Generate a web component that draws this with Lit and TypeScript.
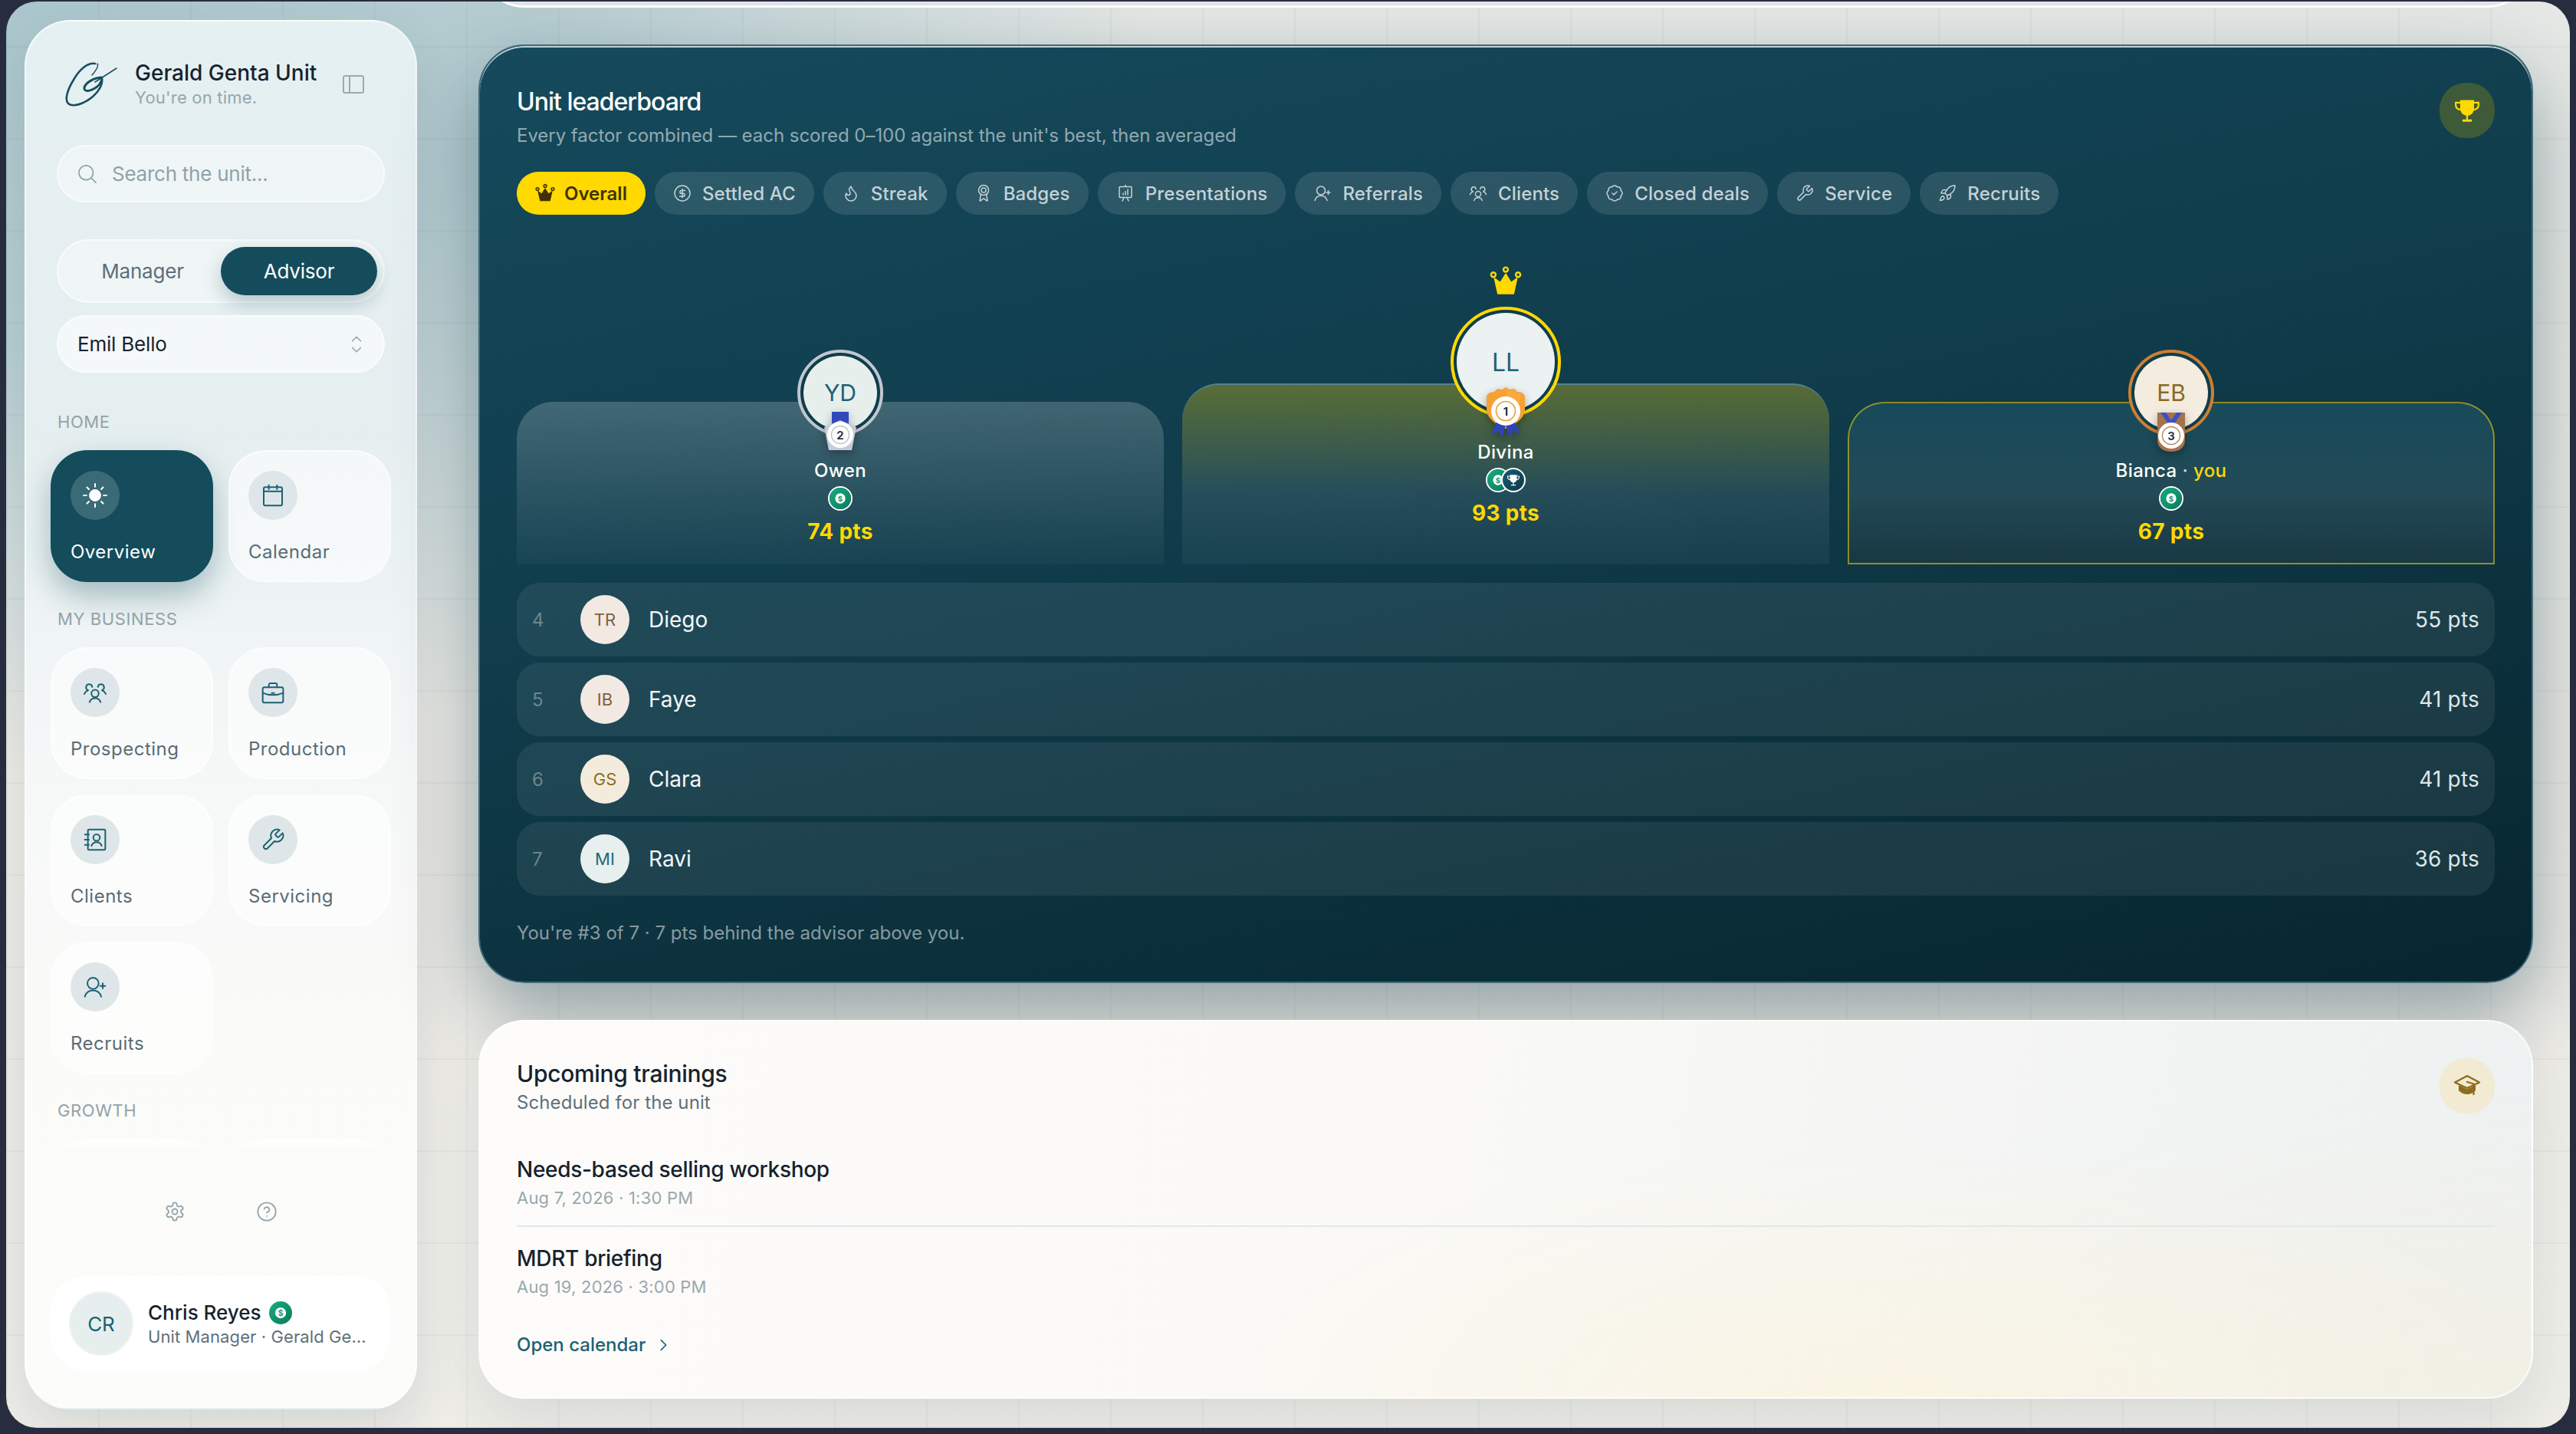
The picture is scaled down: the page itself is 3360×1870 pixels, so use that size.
import { LitElement, html, css, svg } from "lit";
import { customElement } from "lit/decorators.js";

const ic = (body: unknown, size = 28, sw = 2) => html`<svg class="ico" width=${size} height=${size} viewBox="0 0 24 24" fill="none" stroke="currentColor" stroke-width=${sw} stroke-linecap="round" stroke-linejoin="round">${body}</svg>`;

const I = {
  search: svg`<circle cx="10.5" cy="10.5" r="8"/><path d="m21.5 21.5-5.2-5.2"/>`,
  chev: svg`<path d="m7 16 5 5 5-5"/><path d="m7 8 5-5 5 5"/>`,
  sun: svg`<circle cx="12" cy="12" r="5.200" fill="currentColor"/><path d="M12 .8v2.800M12 20.400v2.800M4.100 4.100l1.900 1.900M18 18l1.900 1.900M.8 12h2.800M20.400 12h2.800M4.100 19.900 6 18M18 6l1.900-1.900"/>`,
  cal: svg`<rect x="3" y="4" width="18" height="18" rx="1.500"/><path d="M8 2v4M16 2v4M3 8h18"/>`,
  users: svg`<circle cx="12" cy="13" r="3.600"/><path d="M6.600 21.500c.9-2.500 3-3.800 5.400-3.800s4.500 1.300 5.400 3.800"/><path d="M9.200 6.600A3 3 0 1 0 5 9.600"/><path d="M1.500 13.500c.7-1.800 2-3 3.600-3.500"/><path d="M14.800 6.600A3 3 0 1 1 19 9.600"/><path d="M22.500 13.500c-.7-1.800-2-3-3.600-3.500"/>`,
  brief: svg`<rect x="2" y="7" width="20" height="15" rx="1.500"/><path d="M16 7V4.500A1.500 1.500 0 0 0 14.500 3h-5A1.500 1.500 0 0 0 8 4.500V7"/><path d="M2 12.500c3 1.300 6.500 2 10 2s7-.7 10-2"/><path d="M10.800 12.500h2.400"/>`,
  book: svg`<rect x="5" y="2" width="17" height="20" rx="1"/><path d="M2 7h4M2 12h4M2 17h4"/><circle cx="13.500" cy="10" r="3.200"/><path d="M8.500 18c.9-2.200 2.800-3.500 5-3.500s4.100 1.300 5 3.500"/>`,
  wrench: svg`<path d="M14.700 6.300a1 1 0 0 0 0 1.400l1.600 1.600a1 1 0 0 0 1.400 0l3.770-3.770a6 6 0 0 1-7.940 7.940l-6.910 6.910a2.120 2.120 0 0 1-3-3l6.910-6.910a6 6 0 0 1 7.940-7.940l-3.760 3.760z"/>`,
  userPlus: svg`<circle cx="10" cy="8.500" r="5.500"/><path d="M2 21.500c1-3.800 4.200-6.200 8-6.200s7 2.400 8 6.200"/><path d="M19.500 8.500v5M17 11h5"/>`,
  gear: svg`<path d="M12.220 2h-.44a2 2 0 0 0-2 2v.18a2 2 0 0 1-1 1.730l-.43.250a2 2 0 0 1-2 0l-.15-.08a2 2 0 0 0-2.730.730l-.22.380a2 2 0 0 0 .730 2.730l.15.100a2 2 0 0 1 1 1.720v.510a2 2 0 0 1-1 1.740l-.15.090a2 2 0 0 0-.730 2.730l.22.380a2 2 0 0 0 2.730.730l.15-.08a2 2 0 0 1 2 0l.43.250a2 2 0 0 1 1 1.730V20a2 2 0 0 0 2 2h.44a2 2 0 0 0 2-2v-.18a2 2 0 0 1 1-1.730l.43-.250a2 2 0 0 1 2 0l.15.08a2 2 0 0 0 2.730-.730l.22-.390a2 2 0 0 0-.730-2.730l-.15-.08a2 2 0 0 1-1-1.740v-.5a2 2 0 0 1 1-1.740l.15-.09a2 2 0 0 0 .730-2.730l-.22-.38a2 2 0 0 0-2.730-.730l-.15.08a2 2 0 0 1-2 0l-.43-.25a2 2 0 0 1-1-1.730V4a2 2 0 0 0-2-2z"/><circle cx="12" cy="12" r="3"/>`,
  help: svg`<circle cx="12" cy="12" r="10"/><path d="M9.090 9a3 3 0 0 1 5.830 1c0 2-3 3-3 3"/><path d="M12 17h.01"/>`,
  crown: svg`<path d="M6.200 21 3.700 9.800 8 13l4-6.500L16 13l4.300-3.200L17.800 21z" fill="currentColor" stroke-width="1"/><circle cx="2.800" cy="7" r="1.700" stroke-width="1.400"/><circle cx="12" cy="3.200" r="1.700" stroke-width="1.400"/><circle cx="21.200" cy="7" r="1.700" stroke-width="1.400"/>`,
  dollar: svg`<circle cx="12" cy="12" r="10"/><path d="M15.500 8.500H10.800a1.900 1.900 0 0 0 0 3.800h2.400a1.900 1.900 0 0 1 0 3.800H8.500"/><path d="M12 6.500v11"/>`,
  flame: svg`<path d="M8.500 14.500A2.500 2.500 0 0 0 11 12c0-1.380-.5-2-1-3-1.072-2.143-.224-4.054 2-6 .5 2.500 2 4.900 4 6.500 2 1.600 3 3.500 3 5.500a7 7 0 1 1-14 0c0-1.153.433-2.294 1-3a2.500 2.500 0 0 0 2.500 2.500z"/>`,
  award: svg`<path d="m15.500 13 1.500 8.400a.5.5 0 0 1-.81.470l-3.580-2.690a1 1 0 0 0-1.200 0l-3.590 2.690a.5.5 0 0 1-.81-.470L8.500 13"/><circle cx="12" cy="8" r="6.500"/><circle cx="12" cy="8" r="3"/>`,
  pres: svg`<path d="M12 1.500V3.500"/><rect x="4" y="3.500" width="16" height="14" rx="1"/><path d="m8 22 2-4.500M16 22l-2-4.500"/><path d="M9 14v-2M12 14V9.500M15 14V7"/>`,
  check: svg`<path d="M3.850 8.620a4 4 0 0 1 4.780-4.770 4 4 0 0 1 6.740 0 4 4 0 0 1 4.780 4.780 4 4 0 0 1 0 6.740 4 4 0 0 1-4.770 4.780 4 4 0 0 1-6.750 0 4 4 0 0 1-4.780-4.770 4 4 0 0 1 0-6.760Z"/><path d="m9 12 2 2 4-4"/>`,
  rocket: svg`<path d="M4.500 16.500c-1.500 1.260-2 5-2 5s3.740-.5 5-2c.71-.84.7-2.130-.09-2.910a2.180 2.180 0 0 0-2.910-.09z"/><path d="m12 15-3-3a22 22 0 0 1 2-3.950A12.880 12.880 0 0 1 22 2c0 2.720-.78 7.500-6 11a22.350 22.350 0 0 1-4 2z"/><path d="M9 12H4s.55-3.030 2-4c1.620-1.080 5 0 5 0"/><path d="M12 15v5s3.030-.55 4-2c1.080-1.620 0-5 0-5"/>`,
  chevR: svg`<path d="m9 5 7 7-7 7"/>`,
};

const trophy = (size: number) => html`<svg class="ico" width=${size} height=${size} viewBox="0 0 32 32"><path d="M8 4h16v9.500c0 5-3.500 8.500-8 8.500s-8-3.500-8-8.500z" fill="currentColor"/><path d="M8 7H2.800v2.500c0 3 2.200 5.300 6 5.800M24 7h5.200v2.500c0 3-2.200 5.300-6 5.800" fill="none" stroke="currentColor" stroke-width="2"/><path d="M15 21h2v6h-2zM10.500 26.500h11V29h-11z" fill="currentColor"/></svg>`;

const cap = html`<svg class="ico" width="36" height="30" viewBox="0 0 36 30"><path d="M18 2 34 10.500 18 18 2 10.500z" fill="none" stroke="currentColor" stroke-width="2.400" stroke-linejoin="round"/><path d="M7 14v7c3 3.500 7 5 11 5s8-1.500 11-5v-7l-11 5.500z" fill="currentColor"/><path d="M17 9.500l9.500 3V27" fill="none" stroke="currentColor" stroke-width="2.200"/></svg>`;

const logo = html`<svg class="logo" width="70" height="60" viewBox="0 0 70 60" fill="none" stroke="#164f5f" stroke-linecap="round" stroke-linejoin="round">
  <path d="M40 3C31 1 20 10 12 24 4 37 0 50 5 55c6 5 20 1 32-9C45 39 50 30 49 24" stroke-width="2.600"/>
  <path d="M43 3c2 3-1 8-7 15" stroke-width="1.500"/>
  <path d="M49 21C40 21 28 27 26 34c-1 5 5 6 12 2 6-3 10-8 11-13" stroke-width="3"/>
  <path d="M40 27 68 9" stroke-width="1.500"/>
</svg>`;

const moneyBadge = (size: number) => html`<svg class="ico" width=${size} height=${size} viewBox="0 0 32 32"><defs><linearGradient id="gb" x1="0" y1="0" x2="1" y2="1"><stop offset="0" stop-color="#17ad80"/><stop offset="1" stop-color="#0a7a5a"/></linearGradient></defs><circle cx="16" cy="16" r="16" fill="url(#gb)"/><circle cx="16" cy="16" r="7.600" fill="#fff"/><text x="16" y="20" text-anchor="middle" font-family="Inter" font-size="11" font-weight="700" fill="#15996f">$</text></svg>`;

const medal1 = html`<svg class="medal m1" width="54" height="68" viewBox="0 0 54 68">
  <path d="M27 1l5 3 6-1 4 4 6 1 4 4v17c0 12-11 20-25 26C13 49 2 41 2 29V12l4-4 6-1 4-4 6 1z" fill="#f7a034"/>
  <path d="M27 3l4.500 2.700 6-1 4 4 5.500 1-3 19c-2 9-9 14-17 20z" fill="#fcb24c" opacity=".5"/>
  <path d="M16 44 8 62l9-4 5 9 6-20zM38 44l8 18-9-4-5 9-6-20z" fill="#2f44b3"/>
  <circle cx="27" cy="32" r="19" fill="#fff"/>
  <circle cx="27" cy="32" r="12.500" fill="#fff" stroke="#e8a23c" stroke-width="1.600"/>
  <text x="27" y="37.500" text-anchor="middle" font-family="Inter" font-size="15" font-weight="700" fill="#2a2f45">1</text>
</svg>`;
const medal2 = html`<svg class="medal m2" width="46" height="52" viewBox="0 0 46 52">
  <rect x="12" y="0" width="22" height="16" fill="#3347bd"/>
  <path d="M23 11 44 20 38 50H8L2 20z" fill="#c6cbd6"/>
  <circle cx="23" cy="30" r="17" fill="#fff"/>
  <circle cx="23" cy="30" r="11.500" fill="#fff" stroke="#bcc2ce" stroke-width="1.400"/>
  <text x="23" y="35.500" text-anchor="middle" font-family="Inter" font-size="15" font-weight="700" fill="#2a2f45">2</text>
</svg>`;
const medal3 = html`<svg class="medal m3" width="36" height="52" viewBox="0 0 36 52">
  <path d="M0 0h36v36c0 9-7 15-18 15S0 45 0 36z" fill="#a4734c"/>
  <path d="M4 0 18 20 32 0h-7l-7 10-7-10z" fill="#3c4fc4"/>
  <circle cx="18" cy="30" r="17" fill="#fff"/>
  <circle cx="18" cy="30" r="11.500" fill="#fff" stroke="#b9855c" stroke-width="1.400"/>
  <text x="18" y="35.500" text-anchor="middle" font-family="Inter" font-size="15" font-weight="700" fill="#2a2f45">3</text>
</svg>`;

const tile = (name: string, icon: unknown, active = false) => html`<div class="tile ${active ? "on" : ""}"><span class="tile-ic">${ic(icon, 32, 1.500)}</span><span class="tile-l">${name}</span></div>`;

const pills: [string, unknown][] = [
  ["Settled AC", I.dollar], ["Streak", I.flame], ["Badges", I.award], ["Presentations", I.pres], ["Referrals", I.userPlus],
  ["Clients", I.users], ["Closed deals", I.check], ["Service", I.wrench], ["Recruits", I.rocket],
];

const rows = [
  { r: 4, i: "TR", n: "Diego", p: 55, c: "tan" }, { r: 5, i: "IB", n: "Faye", p: 41, c: "tan" },
  { r: 6, i: "GS", n: "Clara", p: 41, c: "gold" }, { r: 7, i: "MI", n: "Ravi", p: 36, c: "teal" },
];

@customElement("app-root")
export class AppRoot extends LitElement {
  static styles = css`
    :host { display: block; width: 3360px; height: 1870px; overflow: hidden; background: #272d3f; font-family: Inter, "Noto Sans", sans-serif; color: #18242e; }
    * { box-sizing: border-box; }
    .ico { display: block; flex: none; }
    .frame { height: 1870px; padding: 2px 8px 8px; }
    .win { position: relative; height: 100%; border-radius: 40px; overflow: hidden; display: flex; gap: 80px; padding: 0 48px 0 24px;
      background:
        linear-gradient(rgba(30,60,70,.045) 2px, transparent 2px) 0 58px / 120px 120px,
        linear-gradient(90deg, rgba(30,60,70,.045) 2px, transparent 2px) 0 0 / 120px 120px,
        radial-gradient(ellipse 1500px 1000px at 0 0, #aac6cc 0%, rgba(174,200,206,.85) 45%, rgba(174,200,206,0) 100%),
        linear-gradient(180deg, #e5e8e5 0%, #eceae5 60%, #eeede8 100%); }
    /* sidebar */
    .side { flex: none; width: 512px; height: 1812px; margin-top: 24px; display: flex; flex-direction: column; border-radius: 60px; border: 2px solid rgba(255,255,255,.6); border-bottom-color: transparent; padding: 50px 0 48px;
      background: linear-gradient(180deg, #e5f0f2 0%, #e6eff0 30%, #f6f8f8 55%, #fbfbf8 75%, #fcfcfa 100%); box-shadow: 0 24px 60px rgba(30,60,70,.12); }
    .brand { display: flex; align-items: center; padding-left: 50px; height: 64px; flex: none; }
    .logo { flex: none; margin-right: 22px; }
    .bt { width: 259px; }
    .bt b { display: block; font-weight: 500; font-size: 28px; line-height: 34px; letter-spacing: 0; color: #16222c; white-space: nowrap; }
    .bt span { display: block; font-size: 22px; line-height: 30px; color: #95a6ac; letter-spacing: .2px; }
    .panel { margin-left: 12px; color: #9aabb1; }
    .field { flex: none; margin: 0 40px; border-radius: 38px; background: rgba(255,255,255,.4); border: 2px solid rgba(255,255,255,.55); display: flex; align-items: center; }
    .search { margin-top: 47px; height: 75px; padding: 0 0 0 24px; gap: 18px; color: #8fa2a9; font-size: 26px; letter-spacing: -.25px; }
    .seg { flex: none; margin: 48px 40px 0; height: 83px; border-radius: 42px; border: 2px solid rgba(255,255,255,.55); background: rgba(255,255,255,.4); padding: 8px 8px; display: grid; grid-template-columns: 204px 204px; align-items: center; text-align: center; font-size: 26px; letter-spacing: -.2px; color: #5d6f78; }
    .seg .act { background: #144c5c; color: #fff; border-radius: 32px; height: 63px; line-height: 63px; box-shadow: 0 10px 24px rgba(20,76,92,.28); }
    .select { margin-top: 16px; height: 75px; padding: 0 22px 0 25px; justify-content: space-between; background: rgba(255,255,255,.55); font-size: 26px; color: #17232d; letter-spacing: -.2px; }
    .select .ico { color: #9aabb1; }
    .scroll { flex: 1; min-height: 0; overflow: hidden; margin-top: 49px; padding: 0 32px; }
    .sec { font-size: 22px; line-height: 30px; letter-spacing: .6px; color: #91a3a9; padding-left: 9px; }
    .grid { display: grid; grid-template-columns: 212px 212px; gap: 20px; margin: 22px 0 33px; }
    .tile { height: 172px; border-radius: 48px; padding: 25px 24px 0; background: rgba(255,255,255,.55); border: 2px solid rgba(255,255,255,.55); display: flex; flex-direction: column; color: #5a6c75; }
    .tile-ic { width: 64px; height: 64px; border-radius: 50%; background: #dfe6e9; color: #1c6273; display: grid; place-items: center; }
    .tile-l { margin-top: 24px; font-size: 24px; line-height: 36px; letter-spacing: .5px; }
    .tile.on { background: #144c5c; border-color: #144c5c; color: #fff; box-shadow: 0 18px 40px rgba(20,76,92,.35); }
    .tile.on .tile-ic { background: rgba(255,255,255,.17); color: #fff; }
    .foot { flex: none; padding: 70px 32px 0; }
    .tools { display: flex; justify-content: center; gap: 92px; color: #93a6ad; height: 28px; padding-right: 0; }
    .user { margin-top: 70px; height: 124px; border-radius: 46px; background: #fff; display: flex; align-items: center; padding-left: 24px; }
    .uav { width: 84px; height: 84px; border-radius: 50%; background: #e7efee; border: 2px solid #eef2f1; color: #1c6273; display: grid; place-items: center; font-size: 26px; flex: none; }
    .ut { margin-left: 19px; width: 286px; }
    .un { display: flex; align-items: center; gap: 10px; font-size: 26px; font-weight: 500; line-height: 34px; color: #16222c; }
    .us { font-size: 22px; line-height: 28px; color: #5f7079; white-space: nowrap; overflow: hidden; text-overflow: ellipsis; letter-spacing: .1px; }
    /* main */
    .main { flex: 1; min-width: 0; display: flex; flex-direction: column; gap: 48px; }
    .peek { flex: none; height: 128px; margin-top: -120px; border-radius: 60px; background: #e2e5ea; border-bottom: 3px solid #fff; }
    .card { flex: none; border-radius: 60px; padding: 48px; position: relative; }
    .lead { height: 1224px; background: linear-gradient(168deg, #154a5c 0%, #103c4b 45%, #07262f 100%); border: 2px solid #3f6b79; box-shadow: inset 0 2px 0 rgba(255,255,255,.75), 0 40px 100px rgba(15,55,68,.42); color: #fff; }
    .head { display: flex; justify-content: space-between; align-items: flex-start; }
    .h1 { font-size: 32px; line-height: 50px; font-weight: 500; letter-spacing: -1px; }
    .h2 { margin-top: 3px; font-size: 24px; line-height: 32px; color: rgba(255,255,255,.55); letter-spacing: -.04px; }
    .hic { width: 72px; height: 72px; border-radius: 34px; display: grid; place-items: center; flex: none; }
    .hic.y { background: #3f5a38; color: #ffd900; }
    .hic.g { background: #f2ead2; color: #8f6c1c; }
    .pills { display: flex; gap: 12px; margin-top: 31px; }
    .pill { height: 56px; border-radius: 28px; background: rgba(255,255,255,.11); display: flex; align-items: center; gap: 14px; padding: 0 24px; font-size: 24px; letter-spacing: .15px; font-weight: 500; color: #c4d2d6; white-space: nowrap; }
    .pill.on { background: #ffd900; color: #3e3200; font-weight: 600; letter-spacing: 0; gap: 12px; }
    .pod { display: grid; grid-template-columns: repeat(3, 1fr); gap: 24px; align-items: end; margin-top: 66px; }
    .col { position: relative; display: flex; flex-direction: column; align-items: center; padding-bottom: 24px; }
    .col > * { position: relative; }
    .bg { position: absolute !important; left: 0; right: 0; bottom: 0; top: 68px; border-radius: 48px 48px 0 0; background: linear-gradient(180deg, rgba(255,255,255,.2) 0%, rgba(255,255,255,.03) 100%); }
    .col.first { padding-bottom: 48px; }
    .col.first .bg { top: 154px; background: linear-gradient(180deg, rgba(255,217,0,.3) 0%, rgba(255,255,255,.09) 60%, rgba(255,255,255,.04) 100%); border-top: 2px solid #54808f; }
    .col.me .bg { border: 2px solid rgba(255,217,0,.5); border-radius: 48px 48px 0 0; background: linear-gradient(180deg, #174a5b 0%, #234a56 55%, #183843 100%); }
    .crown { color: #ffd900; margin-bottom: 12px; }
    .av { width: 112px; height: 112px; border-radius: 50%; border: 4px solid #c1c7d0; padding: 4px; background: #0f3d4c; flex: none; }
    .av i { display: grid; place-items: center; width: 100%; height: 100%; border-radius: 50%; background: #e7efed; color: #1c6273; font-style: normal; font-size: 30px; }
    .first .av { width: 144px; height: 144px; border-color: #ffd900; }
    .first .av i { background: #ecf1f1; font-size: 32px; }
    .me .av { border-color: #cd7f32; }
    .me .av i { background: #f3ecdf; color: #8a6a20; }
    .medal { position: absolute; filter: drop-shadow(0 4px 6px rgba(0,0,0,.3)); }
    .m1 { left: 41px; top: 100px; }
    .m2 { left: 29px; top: 77px; }
    .m3 { left: 34px; top: 78px; }
    .nm { margin-top: 30px; font-size: 24px; line-height: 32px; font-weight: 500; letter-spacing: .4px; }
    .nm em { font-style: normal; color: #ffd900; }
    .nm s { text-decoration: none; color: #ccd6da; }
    .bd { display: flex; margin-top: 4px; }
    .mb { width: 32px; height: 32px; border-radius: 50%; border: 2px solid #fff; overflow: hidden; display: grid; place-items: center; background: linear-gradient(135deg, #1b5a70, #0d3a4a); color: #fff; }
    .mb + .mb { margin-left: -12px; }
    .pts { margin-top: 8px; font-size: 28px; line-height: 38px; font-weight: 700; color: #ffd900; letter-spacing: .3px; }
    .rows { display: flex; flex-direction: column; gap: 8px; margin-top: 24px; }
    .row { height: 96px; border-radius: 30px; background: rgba(255,255,255,.07); display: flex; align-items: center; padding-right: 20px; }
    .rk { width: 83px; padding-left: 20px; font-size: 24px; color: rgba(255,255,255,.35); }
    .ra { width: 64px; height: 64px; border-radius: 50%; display: grid; place-items: center; font-size: 22px; font-weight: 400; flex: none; }
    .ra.tan { background: #f1e9e2; color: #80603e; }
    .ra.gold { background: #f3ecdd; color: #8c6e22; }
    .ra.teal { background: #e7f0ee; color: #1c6a7a; }
    .rn { margin-left: 25px; flex: 1; font-size: 28px; letter-spacing: 0; color: #f4f7f8; }
    .rp { font-size: 28px; color: #dfe7e9; letter-spacing: .2px; }
    .fine { margin-top: 32px; font-size: 24px; line-height: 34px; color: rgba(255,255,255,.52); letter-spacing: 0; }
    .up { height: 494px; border: 2px solid rgba(255,255,255,.7); box-shadow: 0 30px 70px rgba(30,60,70,.1);
      background: radial-gradient(ellipse 900px 320px at 68% 100%, rgba(250,244,226,.9) 0%, rgba(250,244,226,0) 100%), radial-gradient(ellipse 900px 400px at 100% 100%, rgba(242,240,228,.9) 0%, rgba(242,240,228,0) 100%), linear-gradient(100deg, #fdfcfa 0%, #faf9f6 45%, #edf1f1 100%); }
    .t1 { font-size: 30px; line-height: 40px; font-weight: 500; letter-spacing: -.3px; color: #16222c; }
    .t2 { margin-top: 2px; font-size: 24px; line-height: 32px; color: #5f7079; letter-spacing: .1px; }
    .ev { margin-top: 53px; }
    .ev + .ev { margin-top: 0; padding-top: 23px; border-top: 2px solid #dfe9ec; }
    .ev b { display: block; font-size: 28px; line-height: 36px; font-weight: 500; color: #16222c; letter-spacing: -.3px; }
    .ev span { display: block; margin-top: 4px; padding-bottom: 21px; font-size: 22px; line-height: 30px; color: #98a8ae; letter-spacing: .2px; }
    .link { display: flex; align-items: center; gap: 12px; margin-top: 24px; font-size: 24px; line-height: 32px; font-weight: 500; color: #1c6273; }
  `;

  render() {
    return html`<div class="frame"><div class="win">
      <aside class="side">
        <div class="brand">${logo}<div class="bt"><b>Gerald Genta Unit</b><span>You're on time.</span></div>
          <svg class="panel ico" width="28" height="24" viewBox="0 0 28 24" fill="none" stroke="currentColor" stroke-width="2"><rect x="1" y="1" width="26" height="22" rx="2"/><path d="M9 1v22"/></svg></div>
        <div class="field search">${ic(I.search, 28, 1.500)}<span>Search the unit...</span></div>
        <div class="seg"><span>Manager</span><span class="act">Advisor</span></div>
        <div class="field select"><span>Emil Bello</span>${ic(I.chev, 26, 1.500)}</div>
        <div class="scroll">
          <div class="sec">HOME</div>
          <div class="grid">${tile("Overview", I.sun, true)}${tile("Calendar", I.cal)}</div>
          <div class="sec">MY BUSINESS</div>
          <div class="grid">${tile("Prospecting", I.users)}${tile("Production", I.brief)}${tile("Clients", I.book)}${tile("Servicing", I.wrench)}${tile("Recruits", I.userPlus)}</div>
          <div class="sec">GROWTH</div>
          <div class="grid"><div class="tile"></div><div class="tile"></div></div>
        </div>
        <div class="foot">
          <div class="tools">${ic(I.gear, 28, 1.600)}${ic(I.help, 28, 1.600)}</div>
          <div class="user"><div class="uav">CR</div><div class="ut"><div class="un">Chris Reyes ${moneyBadge(30)}</div><div class="us">Unit Manager · Gerald Genta Unit</div></div></div>
        </div>
      </aside>
      <main class="main">
        <div class="peek"></div>
        <section class="card lead">
          <div class="head"><div><div class="h1">Unit leaderboard</div><div class="h2">Every factor combined — each scored 0–100 against the unit's best, then averaged</div></div><div class="hic y">${trophy(36)}</div></div>
          <div class="pills"><div class="pill on">${ic(I.crown, 26, 2)}Overall</div>${pills.map(([n, i]) => html`<div class="pill">${ic(i, 24, 1.500)}${n}</div>`)}</div>
          <div class="pod">
            <div class="col"><div class="bg"></div><div class="av"><i>YD</i>${medal2}</div><div class="nm">Owen</div><div class="bd"><span class="mb">${moneyBadge(28)}</span></div><div class="pts">74 pts</div></div>
            <div class="col first"><div class="bg"></div><div class="crown">${ic(I.crown, 42, 2)}</div><div class="av"><i>LL</i>${medal1}</div><div class="nm">Divina</div><div class="bd"><span class="mb">${moneyBadge(28)}</span><span class="mb">${trophy(18)}</span></div><div class="pts">93 pts</div></div>
            <div class="col me"><div class="bg"></div><div class="av"><i>EB</i>${medal3}</div><div class="nm">Bianca <s>·</s> <em>you</em></div><div class="bd"><span class="mb">${moneyBadge(28)}</span></div><div class="pts">67 pts</div></div>
          </div>
          <div class="rows">${rows.map((r) => html`<div class="row"><div class="rk">${r.r}</div><div class="ra ${r.c}">${r.i}</div><div class="rn">${r.n}</div><div class="rp">${r.p} pts</div></div>`)}</div>
          <div class="fine">You're #3 of 7 · 7 pts behind the advisor above you.</div>
        </section>
        <section class="card up">
          <div class="head"><div><div class="t1">Upcoming trainings</div><div class="t2">Scheduled for the unit</div></div><div class="hic g">${cap}</div></div>
          <div class="ev"><b>Needs-based selling workshop</b><span>Aug 7, 2026 · 1:30 PM</span></div>
          <div class="ev"><b>MDRT briefing</b><span>Aug 19, 2026 · 3:00 PM</span></div>
          <div class="link">Open calendar ${ic(I.chevR, 22, 1.800)}</div>
        </section>
      </main>
    </div></div>`;
  }
}
